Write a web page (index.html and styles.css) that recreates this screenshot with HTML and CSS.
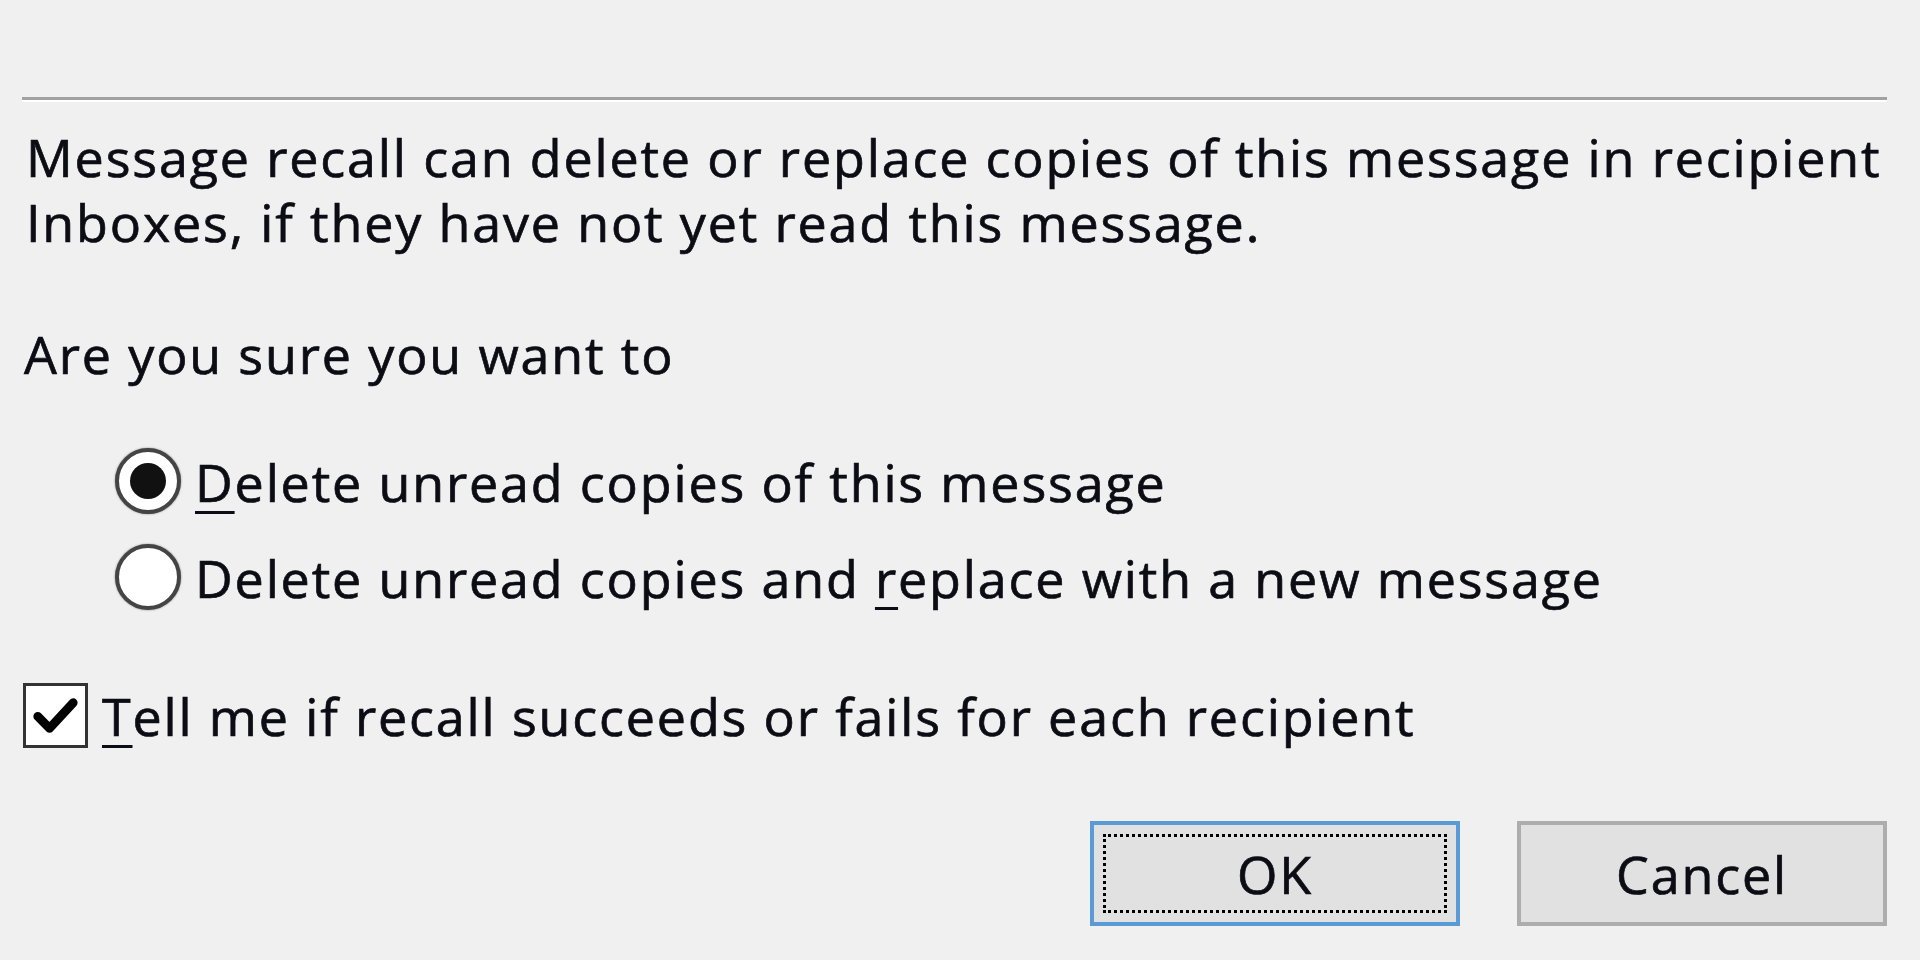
FILE: index.html
```html
<!DOCTYPE html>
<html lang="en">
<head>
<meta charset="utf-8">
<title>Recall This Message</title>
<link rel="stylesheet" href="styles.css">
</head>
<body>
<div class="dialog">
  <div class="separator"></div>
  <p class="intro">Message recall can delete or replace copies of this message in recipient<br>Inboxes, if they have not yet read this message.</p>
  <p class="question">Are you sure you want to</p>
  <div class="options">
    <div class="option">
      <span class="radio checked"><span class="dot"></span></span>
      <span class="label"><u>D</u>elete unread copies of this message</span>
    </div>
    <div class="option">
      <span class="radio"></span>
      <span class="label">Delete unread copies and <u>r</u>eplace with a new message</span>
    </div>
  </div>
  <div class="check-row">
    <span class="checkbox">
      <svg viewBox="0 0 60 60" width="59" height="59"><path d="M12 31 L24 43 L48 17" fill="none" stroke="#000" stroke-width="9" stroke-linecap="round" stroke-linejoin="round"/></svg>
    </span>
    <span class="label"><u>T</u>ell me if recall succeeds or fails for each recipient</span>
  </div>
  <div class="buttons">
    <button class="btn default"><span class="focus">OK</span></button>
    <button class="btn">Cancel</button>
  </div>
</div>
</body>
</html>
```

FILE: styles.css
```css
html, body {
  margin: 0;
  padding: 0;
  background: #f0f0f0;
}

.dialog {
  width: 1920px;
  height: 960px;
  box-sizing: border-box;
  padding: 97px 33px 0 22px;
  font-family: "Open Sans", "Noto Sans", sans-serif;
  font-size: 52px;
  letter-spacing: 1.85px;
  color: #0c0c14;
  -webkit-text-stroke: 0.7px #0c0c14;
}

.separator {
  height: 3px;
  background: #a2a2a2;
  border-bottom: 2px solid #ffffff;
}

p {
  margin: 0;
}

.intro {
  line-height: 65px;
  margin-top: 22px;
  padding-left: 4px;
  white-space: nowrap;
}

.question {
  line-height: 65px;
  margin-top: 67px;
  padding-left: 2px;
}

.options {
  margin-top: 62px;
  padding-left: 93px;
  display: flex;
  flex-direction: column;
  gap: 30px;
}

.option {
  display: flex;
  align-items: center;
  height: 66px;
  gap: 14px;
}

.label u {
  text-decoration-thickness: 3px;
  text-underline-offset: 9px;
}

.radio {
  width: 66px;
  height: 66px;
  box-sizing: border-box;
  border-radius: 50%;
  border: 4px solid #444;
  background: #ffffff;
  display: flex;
  align-items: center;
  justify-content: center;
  flex: none;
  box-shadow: 0 0 2px #777;
}

.radio .dot {
  width: 36px;
  height: 36px;
  border-radius: 50%;
  background: #111;
}

.check-row {
  margin-top: 70px;
  display: flex;
  align-items: center;
  gap: 14px;
  padding-left: 1px;
}

.checkbox {
  width: 65px;
  height: 65px;
  box-sizing: border-box;
  border: 3px solid #333;
  background: #fff;
  display: flex;
  align-items: center;
  justify-content: center;
  flex: none;
}

.buttons {
  margin-top: 70px;
  display: flex;
  justify-content: flex-end;
  gap: 57px;
}

.btn {
  width: 370px;
  height: 105px;
  box-sizing: border-box;
  background: #e1e1e1;
  border: 4px solid #adadad;
  font-family: inherit;
  font-size: 52px;
  letter-spacing: 1.85px;
  color: #0c0c14;
  -webkit-text-stroke: 0.7px #0c0c14;
  padding: 0;
  display: flex;
  align-items: center;
  justify-content: center;
}

.btn.default {
  border-color: #5b9bd5;
  padding: 9px;
}

.btn .focus {
  width: 100%;
  height: 100%;
  box-sizing: border-box;
  border: 3px dotted #000;
  display: flex;
  align-items: center;
  justify-content: center;
}
```
